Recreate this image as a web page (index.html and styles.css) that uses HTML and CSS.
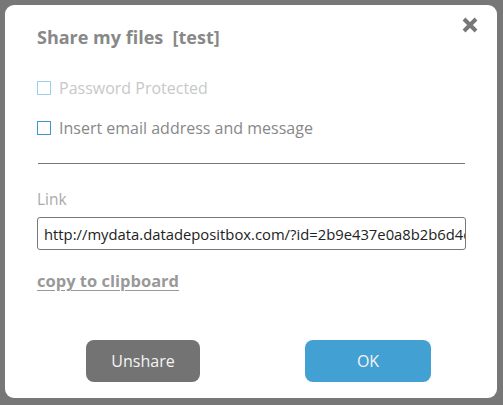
FILE: index.html
```html
<!DOCTYPE html>
<html>
<head>
<meta charset="utf-8">
<link rel="stylesheet" href="styles.css">
</head>
<body>
<div class="dialog">
  <div class="header">
    <h1 class="title">Share my files&nbsp; [test]</h1>
    <span class="close" aria-label="close">
      <svg width="16" height="16" viewBox="0 0 16 16"><path d="M2 2 L14 14 M14 2 L2 14" stroke="#777" stroke-width="4" stroke-linecap="butt"/></svg>
    </span>
  </div>
  <label class="check disabled"><span class="box"></span>Password Protected</label>
  <label class="check"><span class="box"></span>Insert email address and message</label>
  <div class="rule"></div>
  <div class="label">Link</div>
  <input class="field" type="text" readonly value="http://mydata.datadepositbox.com/?id=2b9e437e0a8b2b6d4c1f">
  <a class="copy">copy to clipboard</a>
  <div class="actions">
    <button class="btn unshare">Unshare</button>
    <button class="btn ok">OK</button>
  </div>
</div>
</body>
</html>
```
FILE: styles.css
```css
html, body { margin: 0; padding: 0; }
body {
  background: #777777;
  width: 503px;
  height: 405px;
  overflow: hidden;
  font-family: "Open Sans", "Lato", sans-serif;
}
.dialog {
  box-sizing: border-box;
  margin: 5px 0 0 5px;
  width: 492px;
  height: 393px;
  background: #fff;
  border-radius: 9px;
  padding: 0 19px 0 32px;
  display: flex;
  flex-direction: column;
}
.header {
  display: flex;
  justify-content: space-between;
  align-items: flex-start;
  height: 52px;
}
.title {
  margin: 20px 0 0 0;
  font-size: 18px;
  line-height: 24px;
  font-weight: 700;
  color: #888;
}
.close {
  margin-top: 12px;
  width: 16px;
  height: 16px;
  display: block;
}
.close svg { display: block; }
.check {
  display: flex;
  align-items: center;
  height: 24px;
  font-size: 16px;
  color: #888;
  margin-top: 19px;
}
.check + .check { margin-top: 16px; }
.check .box {
  box-sizing: border-box;
  width: 14px;
  height: 14px;
  border: 1px solid #3d98cf;
  margin-right: 8px;
}
.check.disabled { color: #c8c8c8; }
.check.disabled .box { border-color: #9acfe6; }
.rule {
  width: 427px;
  height: 1px;
  background: #777;
  margin-top: 23px;
  margin-left: 1px;
}
.label {
  margin-top: 25px;
  font-size: 15.5px;
  line-height: 20px;
  color: #aaa;
}
.field {
  box-sizing: border-box;
  display: block;
  margin: 8px 0 0 0;
  width: 429px;
  height: 33px;
  border: 1px solid #777;
  border-radius: 3px;
  padding: 0 0 0 6px;
  font-family: inherit;
  font-size: 14.8px;
  line-height: 31px;
  color: #222;
  background: #fff;
  outline: none;
}
.copy {
  align-self: flex-start;
  margin-top: 21px;
  font-size: 16.5px;
  line-height: 20px;
  font-weight: 700;
  color: #999;
  text-decoration: underline;
  text-underline-offset: 3px;
}
.actions {
  display: flex;
  margin-top: 49px;
  padding-left: 49px;
  gap: 105px;
}
.btn {
  border: none;
  height: 42px;
  border-radius: 8px;
  font-family: inherit;
  font-size: 16px;
  color: #f4f4f4;
  padding: 0;
}
.unshare { width: 114px; background: #737373; }
.ok { width: 126px; background: #42a0d3; }
```
